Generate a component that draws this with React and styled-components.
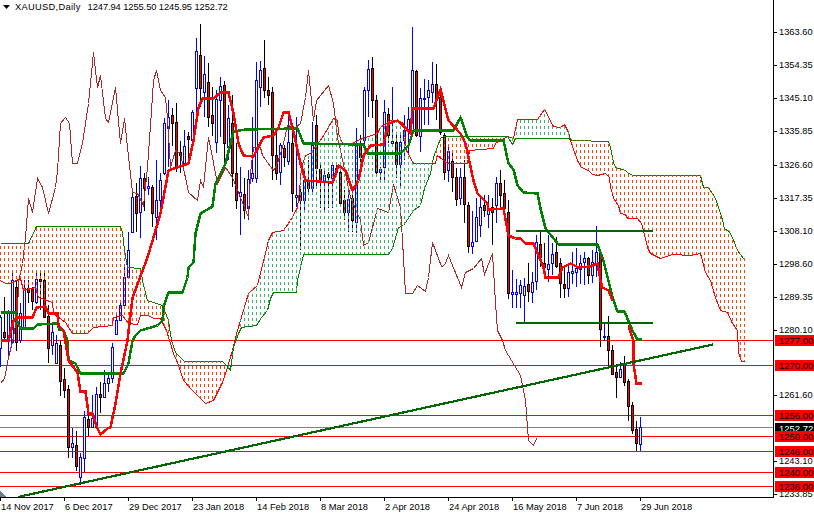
import React from "react";
import styled, { createGlobalStyle } from "styled-components";

const GlobalStyle = createGlobalStyle`
  html, body {
    margin: 0;
    padding: 0;
    background: #fff;
  }
`;

const Terminal = styled.div`
  display: grid;
  grid-template-columns: 774px 40px;
  width: 814px;
  height: 514px;
  overflow: hidden;
  font-family: "Liberation Sans", Arial, sans-serif;
  font-size: 9.3px;
  color: #000;
  background: #fff;
`;

const ChartColumn = styled.div`
  display: flex;
  flex-direction: column;
`;

const Plot = styled.div`
  position: relative;
  box-sizing: border-box;
  width: 774px;
  height: 498px;
  border-right: 1px solid #000;
  border-bottom: 1px solid #000;
  overflow: hidden;

  svg {
    display: block;
  }
`;

const Legend = styled.div`
  position: absolute;
  top: 1px;
  left: 3px;
  display: flex;
  align-items: center;
  gap: 4px;
  white-space: pre;
  line-height: 12px;
`;

const Symbol = styled.span`
  letter-spacing: 0.3px;
  margin-right: 3px;
`;

const Quotes = styled.span`
  letter-spacing: -0.07px;
`;

const TimeAxis = styled.div`
  display: grid;
  grid-template-columns: repeat(11, 64px);
`;

const TimeCell = styled.div`
  position: relative;
  padding: 3px 0 0 1px;
  line-height: 12px;
  white-space: nowrap;

  &::before {
    content: "";
    position: absolute;
    left: 0;
    top: 0;
    width: 1px;
    height: 3px;
    background: #000;
  }
`;

const PriceAxis = styled.div`
  position: relative;
`;

const PriceTick = styled.div`
  position: absolute;
  left: 5px;
  top: ${(p) => p.$y - 6}px;
  line-height: 12px;

  &::before {
    content: "";
    position: absolute;
    left: -5px;
    top: 6px;
    width: 3px;
    height: 1px;
    background: #000;
  }
`;

const PriceTag = styled.div`
  position: absolute;
  left: 1px;
  right: 0;
  top: ${(p) => p.$y - 5}px;
  height: 11px;
  padding-left: 4px;
  font-size: 9.5px;
  line-height: 11px;
  background: ${(p) => p.$bg};
  color: ${(p) => p.$fg};
`;

// [high, body top, body bottom, low, bull] for each bar, 4px apart, in chart pixels
const BARS = [
  [315, 317, 348, 367, 1], [297, 332, 337, 342, 0], [310, 312, 340, 357, 1], [270, 280, 342, 343, 1],
  [280, 287, 342, 351, 0], [303, 313, 340, 343, 1], [280, 288, 328, 330, 1], [280, 288, 292, 303, 0],
  [287, 289, 301, 310, 0], [270, 279, 302, 304, 1], [270, 279, 281, 310, 0], [270, 280, 317, 318, 0],
  [305, 316, 348, 363, 0],
  [323, 332, 345, 355, 1], [335, 343, 363, 363, 1], [340, 345, 381, 396, 0], [368, 379, 390, 398, 0],
  [385, 389, 447, 458, 0], [428, 443, 447, 458, 1], [431, 445, 466, 471, 0], [453, 457, 477, 485, 1],
  [411, 417, 458, 472, 1], [414, 419, 427, 436, 0], [395, 418, 427, 427, 1], [387, 394, 427, 427, 1],
  [382, 394, 397, 413, 0], [370, 383, 397, 397, 1], [373, 378, 383, 392, 1], [343, 347, 378, 383, 1],
  [315, 320, 334, 335, 1], [302, 305, 320, 320, 1], [267, 277, 305, 305, 1], [232, 250, 277, 278, 1],
  [193, 197, 232, 232, 1], [183, 196, 213, 232, 0], [166, 178, 212, 238, 1], [173, 178, 188, 211, 0],
  [177, 186, 188, 195, 1], [185, 187, 213, 227, 0], [160, 200, 217, 240, 1], [173, 180, 200, 210, 1],
  [118, 123, 173, 175, 1], [100, 117, 128, 167, 1], [108, 115, 123, 146, 0], [103, 122, 166, 172, 0],
  [141, 152, 155, 173, 0], [130, 146, 163, 165, 1], [132, 136, 139, 159, 0], [110, 112, 140, 150, 1],
  [38, 51, 88, 115, 1], [24, 55, 88, 107, 0], [56, 74, 92, 117, 1], [63, 82, 117, 127, 0],
  [87, 115, 123, 136, 0], [90, 99, 142, 153, 1], [77, 86, 100, 137, 1], [81, 85, 143, 163, 0],
  [105, 118, 147, 160, 1], [95, 123, 173, 187, 0], [143, 173, 200, 209, 0], [167, 192, 196, 235, 1],
  [178, 194, 210, 219, 0], [170, 179, 208, 220, 1], [117, 173, 178, 182, 1], [62, 80, 178, 183, 1],
  [61, 70, 87, 107, 1], [40, 68, 90, 98, 0], [77, 90, 95, 105, 0], [87, 92, 155, 180, 0],
  [128, 155, 173, 180, 0], [143, 145, 172, 185, 1], [145, 148, 157, 167, 0], [115, 142, 161, 165, 1],
  [133, 143, 193, 212, 0], [117, 195, 197, 207, 1], [188, 192, 200, 250, 0], [168, 180, 200, 210, 1],
  [160, 180, 188, 195, 0], [122, 145, 188, 195, 1], [115, 125, 168, 188, 0], [165, 169, 182, 208, 0],
  [170, 175, 180, 212, 1], [172, 174, 177, 208, 0], [162, 165, 178, 208, 1], [163, 168, 172, 173, 1],
  [170, 172, 203, 203, 0], [190, 200, 212, 220, 0], [190, 199, 212, 232, 1], [190, 198, 220, 232, 0],
  [128, 145, 222, 233, 1], [135, 143, 157, 167, 0], [87, 90, 140, 150, 1],
  [60, 69, 90, 117, 1], [57, 68, 100, 118, 0], [95, 100, 172, 175, 0], [167, 169, 172, 183, 1],
  [100, 112, 167, 183, 1], [108, 114, 135, 143, 0], [87, 141, 143, 145, 1], [133, 142, 164, 178, 0],
  [135, 142, 164, 187, 1], [115, 130, 140, 160, 1], [107, 119, 130, 153, 1], [27, 70, 130, 137, 1],
  [70, 71, 135, 137, 0], [88, 98, 136, 152, 1], [79, 98, 99, 125, 1], [80, 90, 97, 125, 1],
  [62, 84, 92, 103, 1], [64, 84, 100, 120, 0], [88, 97, 132, 135, 0], [133, 135, 172, 180, 0],
  [147, 151, 170, 182, 1], [152, 161, 177, 192, 0], [168, 177, 199, 206, 0], [168, 177, 198, 205, 1],
  [160, 177, 204, 223, 0], [202, 205, 246, 253, 0], [211, 242, 246, 254, 1], [198, 217, 241, 242, 1],
  [195, 207, 225, 237, 1], [195, 205, 210, 217, 0], [195, 208, 214, 228, 1], [198, 207, 212, 245, 0],
  [177, 183, 205, 223, 1], [170, 183, 195, 207, 0], [180, 193, 208, 212, 0], [200, 212, 293, 299, 0],
  [270, 292, 294, 308, 1], [279, 292, 294, 308, 1], [280, 285, 293, 308, 1], [278, 286, 295, 323, 1],
  [263, 284, 291, 302, 0], [272, 282, 292, 303, 1], [235, 242, 281, 290, 1], [232, 244, 257, 267, 0],
  [243, 263, 267, 276, 0], [235, 264, 269, 282, 1], [243, 254, 263, 275, 1], [237, 252, 266, 268, 0],
  [258, 263, 283, 298, 0], [265, 284, 288, 298, 0], [263, 272, 288, 297, 1], [252, 271, 273, 284, 1],
  [248, 268, 272, 287, 1], [255, 263, 269, 284, 1], [252, 258, 262, 285, 1], [257, 258, 275, 284, 0],
  [250, 262, 275, 283, 1], [226, 252, 263, 277, 1], [250, 252, 329, 347, 0], [323, 336, 337, 341, 1],
  [316, 336, 350, 368, 0], [345, 350, 374, 375, 0], [364, 372, 377, 398, 0], [362, 369, 377, 377, 1],
  [356, 363, 382, 386, 0], [379, 381, 406, 421, 0], [402, 405, 430, 434, 0], [421, 429, 443, 451, 0],
  [417, 427, 444, 451, 1],
];

const CHIKOU = [
  [0, 383], [4, 378], [7, 363], [8, 357], [13, 337], [17, 313], [18, 282], [22, 263], [25, 237], [28, 198],
  [32, 212], [37, 178], [42, 187], [48, 213], [55, 187], [57, 170], [60, 123], [65, 117], [69, 123], [72, 163],
  [77, 163], [82, 143], [88, 103], [93, 52], [97, 87], [100, 75], [105, 118], [108, 122], [115, 87], [120, 143],
  [124, 118], [127, 147], [132, 192], [137, 193], [143, 205], [147, 167], [150, 125], [153, 80], [156, 70],
  [160, 90], [165, 97], [167, 117], [170, 167], [175, 150], [180, 153], [188, 192], [197, 200], [200, 180],
  [203, 187], [208, 137], [210, 147], [217, 183], [225, 167], [232, 177], [238, 192], [248, 217], [250, 173],
  [253, 147], [260, 147], [262, 155], [273, 170], [277, 163], [283, 143], [287, 125], [295, 127], [300, 123],
  [305, 97], [308, 70], [313, 120], [316, 100], [328, 85], [333, 103], [337, 137], [340, 150], [350, 197],
  [360, 220], [363, 245], [368, 242], [377, 208], [388, 212], [393, 184], [400, 207], [402, 240], [405, 293],
  [412, 293], [417, 285], [425, 291], [428, 277], [432, 242], [441, 266], [444, 265], [448, 255], [461, 287],
  [465, 272], [473, 268], [481, 258], [484, 274], [492, 253], [495, 302], [497, 330], [502, 340], [505, 350],
  [520, 375], [525, 400], [528, 440], [533, 445], [536, 438],
];

const SPAN_A = [
  [0, 280], [5, 283], [10, 283], [20, 278], [23, 290], [35, 287], [38, 297], [52, 302], [53, 313], [65, 322],
  [72, 333], [87, 333], [93, 327], [112, 325], [113, 317], [122, 315], [128, 323], [137, 324], [140, 315],
  [148, 315], [153, 318], [160, 318], [166, 330], [173, 353], [177, 362], [183, 380], [192, 390], [200, 398],
  [205, 403], [213, 400], [222, 382], [227, 367], [232, 350], [235, 337], [240, 320], [248, 293], [257, 285],
  [268, 240], [272, 232], [283, 230], [290, 220], [297, 207], [299, 190], [301, 167], [305, 155], [310, 153],
  [322, 137], [333, 118], [337, 120], [338, 133], [342, 143], [352, 143], [357, 140], [365, 137], [377, 133],
  [380, 127], [390, 120], [397, 120], [403, 123], [406, 150], [413, 163], [435, 163], [437, 155], [447, 163],
  [467, 163], [469, 150], [493, 148], [495, 143], [507, 136], [513, 138], [517, 119], [537, 119], [544, 109],
  [553, 126], [560, 127], [564, 124], [568, 132], [571, 143], [577, 160], [581, 167], [588, 170], [592, 174],
  [597, 175], [605, 173], [609, 177], [610, 187], [612, 193], [613, 198], [618, 205], [620, 213], [625, 214],
  [627, 218], [637, 218], [641, 223], [643, 230], [647, 247], [650, 253], [660, 258], [672, 254], [690, 255],
  [700, 253], [705, 272], [710, 280], [715, 297], [720, 310], [727, 312], [732, 323], [737, 330], [738, 352],
  [741, 361], [744, 361],
];

const SPAN_B = [
  [0, 243], [28, 243], [36, 226], [120, 226], [122, 232], [124, 250], [127, 267], [140, 268], [143, 285],
  [147, 300], [162, 305], [168, 320], [171, 340], [175, 352], [184, 361], [222, 361], [226, 365], [230, 370],
  [233, 347], [238, 333], [241, 327], [256, 325], [261, 317], [267, 310], [270, 298], [273, 292], [296, 292],
  [297, 280], [300, 267], [303, 254], [388, 254], [392, 248], [398, 227], [403, 225], [413, 210], [420, 205],
  [424, 188], [430, 173], [433, 157], [440, 138], [443, 136], [507, 136], [512, 144], [515, 138], [568, 138],
  [572, 140], [608, 141], [610, 147], [613, 162], [615, 167], [625, 170], [627, 172], [632, 175], [700, 175],
  [703, 187], [708, 187], [715, 198], [720, 213], [723, 223], [724, 229], [728, 230], [732, 237], [737, 250],
  [743, 258], [744, 258],
];

const KIJUN = [
  [0, 312], [15, 312], [17, 322], [20, 328], [33, 328], [37, 324], [57, 323], [59, 329], [63, 330], [67, 340],
  [68, 360], [75, 363], [80, 373], [123, 373], [128, 363], [132, 340], [135, 335], [140, 330], [157, 325],
  [162, 320], [163, 307], [168, 292], [182, 292], [187, 277], [188, 267], [193, 262], [195, 233], [200, 213],
  [212, 206], [215, 183], [225, 163], [230, 143], [233, 131], [245, 129], [297, 128], [303, 143], [363, 144],
  [367, 153], [400, 153], [408, 145], [413, 130], [453, 130], [460, 117], [467, 137], [470, 140], [503, 140],
  [508, 163], [513, 169], [517, 185], [523, 192], [537, 193], [540, 208], [545, 228], [558, 244], [597, 244],
  [603, 260], [612, 297], [617, 311], [624, 311], [632, 330], [637, 339], [641, 339],
];

const TENKAN = [
  [0, 340], [8, 340], [13, 320], [17, 317], [32, 317], [36, 307], [45, 306], [48, 313], [57, 313], [58, 325],
  [63, 330], [68, 360], [77, 372], [80, 391], [85, 391], [88, 413], [92, 413], [97, 428], [100, 434], [107, 428],
  [110, 427], [115, 403], [120, 373], [127, 340], [132, 297], [147, 257], [160, 213], [168, 170], [188, 163],
  [193, 140], [198, 107], [202, 98], [213, 98], [220, 92], [228, 92], [233, 113], [238, 143], [243, 155],
  [253, 156], [263, 137], [273, 135], [278, 127], [283, 112], [288, 112], [292, 127], [300, 163], [305, 180],
  [332, 182], [338, 165], [345, 170], [352, 190], [358, 180], [363, 155], [370, 145], [383, 144], [388, 123],
  [397, 120], [405, 127], [410, 133], [412, 108], [433, 108], [440, 89], [448, 120], [460, 133], [465, 143],
  [473, 180], [477, 193], [487, 203], [488, 209], [503, 208], [508, 235], [515, 238], [520, 238], [525, 243],
  [533, 243], [543, 267], [545, 277], [558, 277], [562, 267], [570, 263], [578, 267], [590, 266], [597, 263],
  [600, 280], [602, 287], [608, 290], [612, 300],
];

const TENKAN_TAIL = [[628, 325], [633, 340], [633, 363], [636, 383], [641, 383]];

const RED_LEVELS = [340, 365, 415, 436, 451, 472, 486];

const PRICES = [
  ["1363.60", 32], ["1354.35", 65], ["1345.10", 98], ["1335.85", 131], ["1326.60", 165], ["1317.35", 198],
  ["1308.10", 231], ["1298.60", 264], ["1289.35", 297], ["1280.10", 330], ["1261.60", 395], ["1243.10", 461],
  ["1233.85", 494],
];

const TAGS = [
  ["1277.00", 340], ["1270.00", 365], ["1256.00", 415], ["1250.00", 436], ["1246.00", 451], ["1240.00", 472],
  ["1236.00", 486],
];

const DATES = [
  "14 Nov 2017", "6 Dec 2017", "29 Dec 2017", "23 Jan 2018", "14 Feb 2018", "8 Mar 2018", "2 Apr 2018",
  "24 Apr 2018", "16 May 2018", "7 Jun 2018", "29 Jun 2018",
];

const toPoints = (line) => line.map(([x, y]) => `${x + 0.5},${y + 0.5}`).join(" ");

function yAt(line, x) {
  for (let i = 1; i < line.length; i++) {
    const [x0, y0] = line[i - 1];
    const [x1, y1] = line[i];
    if (x >= x0 && x <= x1) {
      return x1 === x0 ? y0 : y0 + ((y1 - y0) * (x - x0)) / (x1 - x0);
    }
  }
  return null;
}

function Bar({ x, bar }) {
  const [high, top, bottom, low, bull] = bar;
  const edge = bull ? "#0000ff" : "#000";
  return (
    <g>
      <line x1={x + 0.5} x2={x + 0.5} y1={high} y2={low} stroke={edge} />
      <rect
        x={x - 0.5}
        y={top + 0.5}
        width={2}
        height={Math.max(bottom - top, 1)}
        fill={bull ? "#fff" : "#ff0000"}
        stroke={edge}
      />
    </g>
  );
}

function Cloud() {
  const columns = [];
  for (let x = 0; x <= 744; x += 4) {
    const a = yAt(SPAN_A, x);
    const b = yAt(SPAN_B, x);
    if (a === null || b === null) continue;
    const top = Math.round(Math.min(a, b));
    columns.push(
      <line
        key={x}
        x1={x + 0.5}
        x2={x + 0.5}
        y1={top}
        y2={Math.round(Math.max(a, b))}
        stroke={a < b ? "#3cb371" : "#ff4500"}
        strokeDasharray="3 3"
        strokeDashoffset={top % 6}
      />
    );
  }
  return <g>{columns}</g>;
}

function Chart() {
  return (
    <svg width="773" height="497" shapeRendering="crispEdges">
      {RED_LEVELS.map((y) => (
        <line key={y} x1="0" x2="773" y1={y + 0.5} y2={y + 0.5} stroke="#ff0000" />
      ))}
      <line x1="0" x2="773" y1="427.5" y2="427.5" stroke="#808080" />
      {BARS.map((bar, i) => (
        <Bar key={i} x={i * 4} bar={bar} />
      ))}
      <polyline points={toPoints(CHIKOU)} fill="none" stroke="#a52a2a" />
      <polyline points={toPoints(SPAN_A)} fill="none" stroke="#ff0000" />
      <polyline points={toPoints(SPAN_B)} fill="none" stroke="#008000" />
      <Cloud />
      <polyline points={toPoints(KIJUN)} fill="none" stroke="#008000" strokeWidth="2.5" />
      <polyline points={toPoints(TENKAN)} fill="none" stroke="#ff0000" strokeWidth="2.5" />
      <polyline points={toPoints(TENKAN_TAIL)} fill="none" stroke="#ff0000" strokeWidth="2.5" />
      <line x1="516" x2="653" y1="231" y2="231" stroke="#006400" strokeWidth="2" />
      <line x1="516" x2="653" y1="323" y2="323" stroke="#006400" strokeWidth="2" />
      <line x1="18" x2="713" y1="497" y2="344.5" stroke="#006400" strokeWidth="2.2" />
      <polygon points="0,491 6,497 0,497" fill="#708090" />
    </svg>
  );
}

export default function App() {
  return (
    <>
      <GlobalStyle />
      <Terminal>
        <ChartColumn>
          <Plot>
            <Chart />
            <Legend>
              <svg width="8" height="5" viewBox="0 0 8 5">
                <polygon points="0,0 7,0 3.5,4" fill="#000" />
              </svg>
              <Symbol>XAUUSD,Daily</Symbol>
              <Quotes>1247.94 1255.50 1245.95 1252.72</Quotes>
            </Legend>
          </Plot>
          <TimeAxis>
            {DATES.map((date) => (
              <TimeCell key={date}>{date}</TimeCell>
            ))}
          </TimeAxis>
        </ChartColumn>
        <PriceAxis>
          {PRICES.map(([label, y]) => (
            <PriceTick key={label} $y={y}>
              {label}
            </PriceTick>
          ))}
          <PriceTag $y={428} $bg="#000" $fg="#fff">
            1252.72
          </PriceTag>
          {TAGS.map(([label, y]) => (
            <PriceTag key={label} $y={y} $bg="#ff0000" $fg="#000">
              {label}
            </PriceTag>
          ))}
        </PriceAxis>
      </Terminal>
    </>
  );
}
